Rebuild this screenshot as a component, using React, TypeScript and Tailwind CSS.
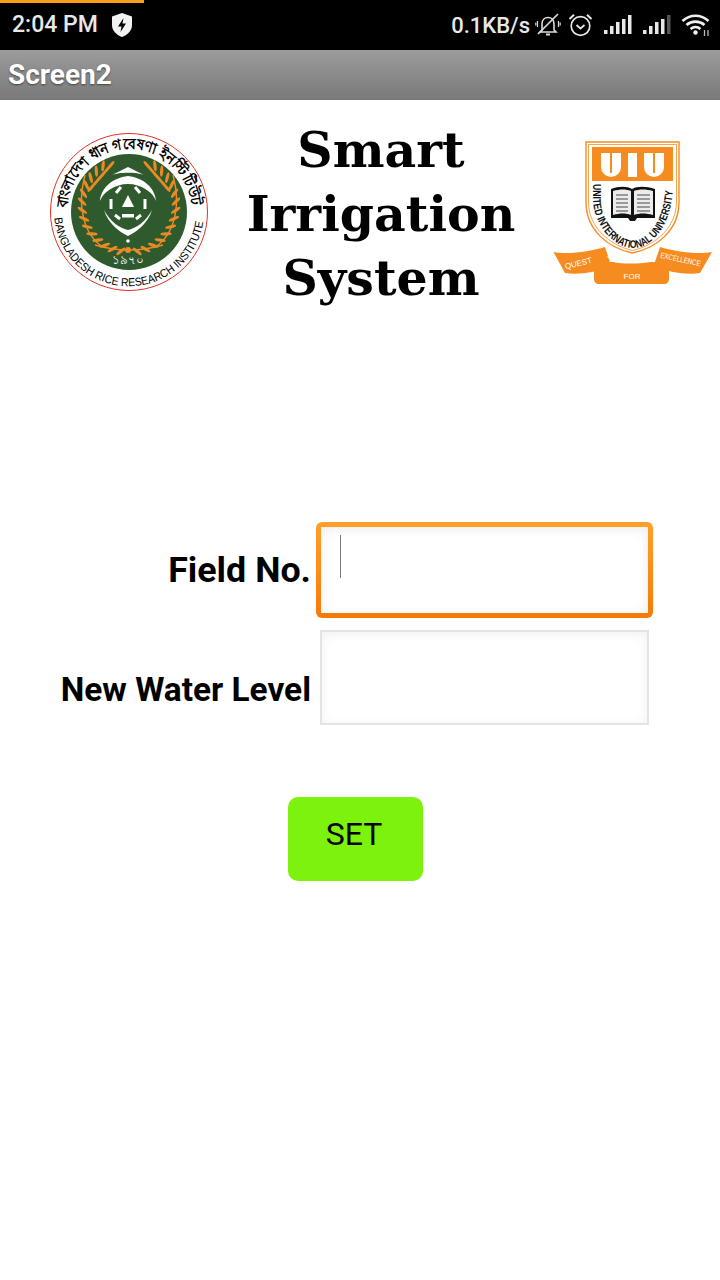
const roboto = { fontFamily: 'Roboto, sans-serif' };

function ShieldIcon() {
  return (
    <svg width="24" height="26" viewBox="0 0 24 26">
      <path d="M12 1 L22 4.5 V13 C22 19 17 23 12 25 C7 23 2 19 2 13 V4.5 Z" fill="#f2f2f2" />
      <path d="M13.5 6 L8 14.5 H11.5 L10.5 20 L16 11.5 H12.5 Z" fill="#000" />
    </svg>
  );
}

function MutedBell() {
  return (
    <svg width="26" height="24" viewBox="0 0 26 24" fill="none" stroke="#dcdcdc" strokeWidth="1.6">
      <path d="M7 17 V11 C7 7 9.5 4.5 13 4.5 C16.5 4.5 19 7 19 11 V17 L21 19 H5 Z" />
      <path d="M11 21.5 H15" strokeWidth="2" />
      <path d="M3 21 L23 1" strokeWidth="1.7" />
      <path d="M2.5 8 V14 M0.8 9.5 V12.5 M23.5 8 V14 M25.2 9.5 V12.5" strokeWidth="1.2" />
    </svg>
  );
}

function AlarmIcon() {
  return (
    <svg width="25" height="24" viewBox="0 0 25 24" fill="none" stroke="#e6e6e6" strokeWidth="1.7">
      <circle cx="12.5" cy="13" r="9.3" />
      <path d="M8.5 12 L12.5 15.5 L16.5 12" />
      <path d="M1.5 6 L6 1.8 M23.5 6 L19 1.8" strokeWidth="2" />
    </svg>
  );
}

function SignalIcon({ dim }: { dim?: boolean }) {
  return (
    <svg width="28" height="20" viewBox="0 0 28 20" fill="#e8e8e8">
      <rect x="0" y="15" width="3.5" height="4" />
      <rect x="6" y="11" width="3.5" height="8" />
      <rect x="12" y="7" width="3.5" height="12" />
      <rect x="18" y="4" width="3.5" height="15" />
      <rect x="24" y="0" width="3.5" height="19" fill={dim ? '#555' : '#e8e8e8'} />
    </svg>
  );
}

function WifiIcon() {
  return (
    <svg width="30" height="24" viewBox="0 0 30 24" fill="none" stroke="#f0f0f0" strokeWidth="2.6">
      <path d="M1.5 8 C9 1 20 1 27.5 8" />
      <path d="M5.5 12 C10.5 7.5 18.5 7.5 23.5 12" />
      <path d="M9.5 16 C12.5 13.5 16.5 13.5 19.5 16" />
      <circle cx="14.5" cy="19.5" r="2.2" fill="#f0f0f0" stroke="none" />
      <path d="M23.5 17 V23 M27 17 V23" stroke="#bbb" strokeWidth="1.3" />
    </svg>
  );
}

// wheat sprig leaves around the green disc
const leaves = Array.from({ length: 14 }, (_, i) => 100 + i * 10.5);
const upper = [0, 1, 2, 3, 4, 5];

function BrriLogo() {
  return (
    <svg width="160" height="158" viewBox="0 0 160 158" className="shrink-0">
      <defs>
        <path id="brri-top" d="M 18 78 A 62 62 0 0 1 142 78" />
        <path id="brri-bottom" d="M 5.3 85 A 75 75 0 0 0 154.7 85" />
      </defs>
      <circle cx="80" cy="79" r="78.5" fill="#fff" stroke="#e0312b" strokeWidth="1" />
      <circle cx="80" cy="79" r="58" fill="#2f5a2e" />
      <text fontSize="15" fontWeight="700" fill="#000" fontFamily="'Noto Sans', 'DejaVu Sans', sans-serif">
        <textPath href="#brri-top" startOffset="3" textLength="186" lengthAdjust="spacingAndGlyphs">বাংলাদেশ ধান গবেষণা ইনস্টিটিউট</textPath>
      </text>
      <text fontSize="11.5" fill="#000" fontFamily="'Liberation Sans', sans-serif">
        <textPath href="#brri-bottom" textLength="218" lengthAdjust="spacingAndGlyphs">BANGLADESH RICE RESEARCH INSTITUTE</textPath>
      </text>
      {/* rice sprigs */}
      <path d="M52 113 C34 100 28 72 36 42 M108 113 C126 100 132 72 124 42 M46 112 Q80 122 114 112" stroke="#e88a25" strokeWidth="1.5" fill="none" />
      {leaves.map((a) => {
        const r = (a * Math.PI) / 180;
        const x = 80 + 47 * Math.cos(r);
        const y = 72 + 47 * Math.sin(r);
        return (
          <g key={a} fill="#e88a25">
            <ellipse cx={x} cy={y} rx="5.6" ry="1.6" transform={`rotate(${a + 40} ${x} ${y})`} />
            <ellipse cx={160 - x} cy={y} rx="5.6" ry="1.6" transform={`rotate(${-a - 40} ${160 - x} ${y})`} />
          </g>
        );
      })}
      {upper.map((i) => {
        const x = 42 + i * 4;
        const y = 55 - i * 4.6;
        return (
          <g key={i} fill="#e88a25">
            <ellipse cx={x} cy={y} rx="5" ry="1.5" transform={`rotate(-50 ${x} ${y})`} />
            <ellipse cx={160 - x} cy={y} rx="5" ry="1.5" transform={`rotate(50 ${160 - x} ${y})`} />
          </g>
        );
      })}
      <circle cx="79" cy="117" r="3" fill="#e88a25" />
      {/* grain emblem */}
      <path d="M63 42 L79 34 L95 42 C88 39 70 39 63 42 Z" fill="#fff" />
      <path d="M79 43 C63 45 52 55 51 68 C54 59 66 51 79 51 C92 51 104 59 107 68 C106 55 95 45 79 43 Z" fill="#fff" />
      <path d="M55 77 C59 90 69 98 79 103 C89 98 99 90 103 77 C97 88 88 95 79 97 C70 95 61 88 55 77 Z" fill="#fff" />
      <path d="M79 62 L85 74 H73 Z" fill="#fff" />
      <path d="M72 54 L67 60 M86 54 L91 60 M62 66 L62 76 M96 66 L96 76 M66 82 L71 86 M92 82 L87 86" stroke="#fff" strokeWidth="3" />
      <rect x="73" y="81" width="12" height="3.5" fill="#fff" />
      <circle cx="79" cy="108" r="1.8" fill="#fff" />
      <text x="79" y="131" textAnchor="middle" fontSize="12" fill="#fff" fontFamily="'Noto Sans', sans-serif">১৯৭০</text>
    </svg>
  );
}

function UiuLogo() {
  return (
    <svg width="160" height="146" viewBox="0 0 160 146" className="shrink-0">
      <defs>
        <path id="uiu-arc" d="M 40 44 V 58 C 40 86 62 108 80 108 C 98 108 120 86 120 44" />
      </defs>
      {/* shield outline */}
      <path d="M33 2 H126 V62 C126 90 104 108 79.5 113 C55 108 33 90 33 62 Z" fill="#fff" stroke="#f68b1f" strokeWidth="1.4" />
      <path d="M35.5 4.5 H123.5 V62 C123.5 87 103 105 79.5 110.5 C56 105 35.5 87 35.5 62 Z" fill="none" stroke="#f68b1f" strokeWidth="0.8" />
      <rect x="39" y="7" width="81" height="34" fill="#f68b1f" />
      {/* UIU block letters */}
      <path d="M48 13 H68 V27 A10 10 0 0 1 48 27 Z" fill="#fff" />
      <rect x="57" y="13" width="2" height="20" fill="#f68b1f" />
      <rect x="75" y="13" width="9" height="24" fill="#fff" />
      <path d="M91 13 H111 V27 A10 10 0 0 1 91 27 Z" fill="#fff" />
      <rect x="100" y="13" width="2" height="20" fill="#f68b1f" />
      {/* book */}
      <path d="M58 49 C66 46 74 46 79 49 C84 46 93 46 102 49 V78 H84 L82 81 H77 L75 78 H58 Z" fill="#111" />
      <path d="M60 51 C67 49 73 49 78 51 V75 C73 73 67 73 60 75 Z M81 51 C86 49 93 49 100 51 V75 C93 73 86 73 81 75 Z" fill="#ececec" />
      <path d="M63 55 H75 M63 59 H75 M63 63 H75 M63 67 H75 M63 71 H75 M84 55 H97 M84 59 H97 M84 63 H97 M84 67 H97 M84 71 H97" stroke="#999" strokeWidth="1.8" />
      <text fontSize="11" fontWeight="700" fill="#111" fontFamily="'Liberation Sans', sans-serif">
        <textPath href="#uiu-arc" textLength="160" lengthAdjust="spacingAndGlyphs">UNITED INTERNATIONAL UNIVERSITY</textPath>
      </text>
      {/* ribbon */}
      <path d="M0.5 112 C16 115 38 111 52 107 L58 125 C44 133 24 135 12 133 Z" fill="#f68b1f" />
      <path d="M159 112 C143 115 121 111 107 107 L101 125 C115 133 135 135 147 133 Z" fill="#f68b1f" />
      <path d="M41 124 C52 122 58 122 60 122 C75 121 85 121 100 122 L116 124 V139 C116 142 114 144 111 144 H46 C43 144 41 142 41 139 Z" fill="#f68b1f" />
      <path d="M53 116 C62 120 92 120 101 116 L97 122 C85 124 70 124 60 122 Z" fill="#fff" />
      <text x="26" y="126" textAnchor="middle" fontSize="8" fill="#fff" fontFamily="'Liberation Sans', sans-serif" transform="rotate(-14 26 126)">QUEST</text>
      <text x="127" y="122" textAnchor="middle" fontSize="8" fill="#fff" fontFamily="'Liberation Sans', sans-serif" textLength="41" lengthAdjust="spacingAndGlyphs" transform="rotate(12 127 122)">EXCELLENCE</text>
      <text x="79" y="139" textAnchor="middle" fontSize="8" fill="#fff" fontFamily="'Liberation Sans', sans-serif">FOR</text>
    </svg>
  );
}

export default function App() {
  return (
    <div className="w-[720px] h-[1280px] bg-white overflow-hidden" style={roboto}>
      {/* status bar */}
      <div className="relative h-[50px] bg-black flex items-center justify-between pl-[12px] pr-[9px] text-[#e8e8e8] text-[23px] font-medium">
        <div className="absolute left-0 top-0 w-[144px] h-[3px] bg-[#ff9d1f]" />
        <div className="flex items-center gap-[12px]">
          <span>2:04 PM</span>
          <ShieldIcon />
        </div>
        <div className="flex items-center">
          <span className="mr-[5px] text-[22px]">0.1KB/s</span>
          <MutedBell />
          <span className="w-[7px]" />
          <AlarmIcon />
          <span className="w-[11px]" />
          <SignalIcon />
          <span className="w-[11px]" />
          <SignalIcon dim />
          <span className="w-[10px]" />
          <WifiIcon />
        </div>
      </div>

      {/* title bar */}
      <div className="h-[50px] flex items-center pl-[8px] bg-gradient-to-b from-[#9c9c9c] to-[#797979]">
        <span className="text-white text-[28px] font-bold [text-shadow:0_1px_2px_rgba(0,0,0,0.5)]">Screen2</span>
      </div>

      {/* header with logos */}
      <div className="flex pl-[49px] pr-[7px] h-[222px]">
        <div className="pt-[33px]"><BrriLogo /></div>
        <div className="flex-1 pt-[18px] text-center text-black font-bold text-[49px] leading-[64px] font-['DejaVu_Serif',serif]">
          <div>Smart</div>
          <div>Irrigation</div>
          <div>System</div>
        </div>
        <div className="pt-[40px]"><UiuLogo /></div>
      </div>

      {/* form */}
      <div className="mt-[200px] flex flex-col">
        <div className="flex items-center h-[96px]">
          <div className="w-[311px] text-right text-[35.8px] font-bold text-black pt-[1px]">Field No.</div>
          <div className="ml-[5px] w-[337px] h-[96px] p-[5px] rounded-[6px] bg-gradient-to-b from-[#ff9f2a] to-[#f57a05]">
            <div className="w-full h-full bg-white shadow-[inset_0_2px_12px_rgba(0,0,0,0.08)] pl-[19px] pt-[8px]">
              <div className="w-px h-[43px] bg-[#777]" />
            </div>
          </div>
        </div>
        <div className="flex items-center mt-[12px] h-[95px]">
          <div className="w-[311px] text-right text-[33.4px] font-bold text-black pt-[26px]">New Water Level</div>
          <div className="ml-[9px] w-[329px] h-[95px] border-2 border-[#e4e4e4] bg-white shadow-[inset_0_2px_12px_rgba(0,0,0,0.06)]" />
        </div>
      </div>

      <div className="mt-[72px] ml-[288px] w-[135px] h-[84px] rounded-[10px] bg-[#7cf20d] flex items-center justify-center text-[32px] text-black pb-[10px] pr-[3px]">
        SET
      </div>
    </div>
  );
}
